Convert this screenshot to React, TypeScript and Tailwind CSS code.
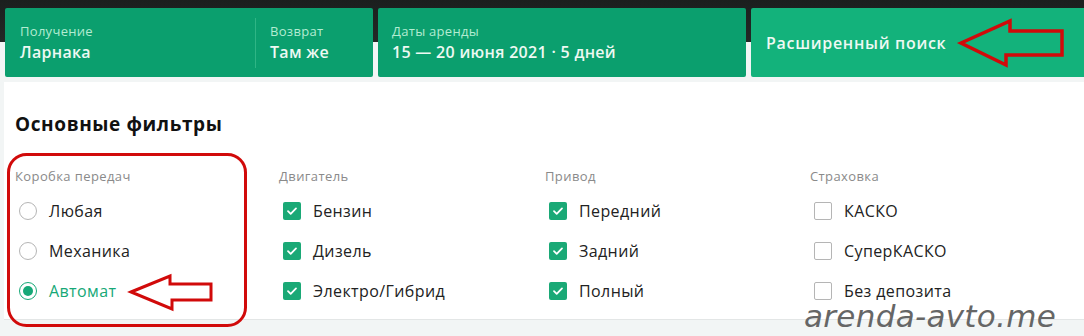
import React from "react";

const font = { fontFamily: '"Open Sans", "Noto Sans", sans-serif' };

function Radio({ label, checked }: { label: string; checked?: boolean }) {
  return (
    <div className="flex items-center h-10 gap-3 pl-1">
      <span
        className={
          "w-[18px] h-[18px] rounded-full border-[1.5px] flex items-center justify-center " +
          (checked ? "border-[#16a877]" : "border-[#b5b5b5]")
        }
      >
        {checked && <span className="w-[10px] h-[10px] rounded-full bg-[#16a877]" />}
      </span>
      <span className={"text-[16px] tracking-[0.4px] " + (checked ? "text-[#16a877]" : "text-[#222]")}>{label}</span>
    </div>
  );
}

function Check({ label, checked }: { label: string; checked?: boolean }) {
  return (
    <div className="flex items-center h-10 gap-3 pl-1">
      {checked ? (
        <span className="w-[18px] h-[18px] rounded-[2px] bg-[#1aa976] flex items-center justify-center">
          <svg width="12" height="12" viewBox="0 0 12 12" fill="none">
            <path d="M2 6.2l2.7 2.6L10 3.4" stroke="white" strokeWidth="1.8" strokeLinecap="round" strokeLinejoin="round" />
          </svg>
        </span>
      ) : (
        <span className="w-[18px] h-[18px] rounded-[2px] border-[1.5px] border-[#b5b5b5] bg-white" />
      )}
      <span className="text-[16px] tracking-[0.4px] text-[#222]">{label}</span>
    </div>
  );
}

function Group({ title, w, children }: { title: string; w: string; children: React.ReactNode }) {
  return (
    <div className={w}>
      <div className="text-[13px] tracking-[0.4px] text-[#8a8a8a] h-[20px] leading-[20px]">{title}</div>
      <div className="mt-[5px]">{children}</div>
    </div>
  );
}

export default function App() {
  return (
    <div
      className="relative w-[1084px] h-[336px] overflow-hidden bg-[linear-gradient(to_bottom,#1b1f1e_0px,#232826_42px,#f2f5f5_42px)]"
      style={font}
    >
      <div className="flex gap-[5px] pl-[5px] pt-[8px] h-[77px]">
        <div className="w-[368px] bg-[#0b9f6e] rounded-[2px] flex items-center">
          <div className="w-[251px] pl-[15px] border-r border-[#2fb585] h-[50px] flex flex-col justify-center">
            <div className="text-[13px] tracking-[0.3px] text-[#b3ecd2] leading-[18px]">Получение</div>
            <div className="text-[16px] tracking-[0.3px] font-semibold text-[#eef9f3] leading-[24px]">Ларнака</div>
          </div>
          <div className="pl-[14px] flex flex-col justify-center">
            <div className="text-[13px] tracking-[0.3px] text-[#b3ecd2] leading-[18px]">Возврат</div>
            <div className="text-[16px] tracking-[0.3px] font-semibold text-[#eef9f3] leading-[24px]">Там же</div>
          </div>
        </div>
        <div className="w-[368px] bg-[#0b9f6e] rounded-[2px] pl-[14px] flex flex-col justify-center">
          <div className="text-[13px] tracking-[0.3px] text-[#b3ecd2] leading-[18px]">Даты аренды</div>
          <div className="text-[16px] tracking-[0.3px] font-semibold text-[#eef9f3] leading-[24px]">15 — 20 июня 2021 · 5 дней</div>
        </div>
        <div className="flex-1 bg-[#13b27b] rounded-l-[2px] pl-[15px] flex items-center">
          <div className="text-[16px] tracking-[0.7px] font-semibold text-[#eef9f3]">Расширенный поиск</div>
        </div>
      </div>

      <div className="mt-[5px] ml-[4px] bg-white h-[238px] border-b border-[#e3e6e6] pl-[11px]">
        <div className="pt-[30px] text-[19px] tracking-[0.6px] font-bold text-[#111] leading-[24px]">Основные фильтры</div>
        <div className="flex mt-[30px]">
          <Group title="Коробка передач" w="w-[264px]">
            <Radio label="Любая" />
            <Radio label="Механика" />
            <Radio label="Автомат" checked />
          </Group>
          <Group title="Двигатель" w="w-[266px]">
            <Check label="Бензин" checked />
            <Check label="Дизель" checked />
            <Check label="Электро/Гибрид" checked />
          </Group>
          <Group title="Привод" w="w-[265px]">
            <Check label="Передний" checked />
            <Check label="Задний" checked />
            <Check label="Полный" checked />
          </Group>
          <Group title="Страховка" w="w-[260px]">
            <Check label="КАСКО" />
            <Check label="СуперКАСКО" />
            <Check label="Без депозита" />
          </Group>
        </div>
      </div>

      <svg className="absolute inset-0 pointer-events-none" width="1084" height="336" viewBox="0 0 1084 336">
        <rect x="8.5" y="154.5" width="237" height="171" rx="18" fill="none" stroke="#d10a0a" strokeWidth="3" />
        <polygon
          points="131,292 170,276 170,284 211,284 211,300 172,300 172,309"
          fill="white"
          stroke="#d10a0a"
          strokeWidth="3"
          strokeLinejoin="miter"
        />
        <polygon
          points="961,43 1010,21 1010,31 1062,31 1062,55 1006,55 1006,65"
          fill="none"
          stroke="#d10a0a"
          strokeWidth="3.5"
        />
      </svg>

      <div
        className="absolute left-[804px] top-[298px] whitespace-nowrap text-[31px] italic font-extralight text-[#666] leading-[36px] tracking-[0.3px]"
        style={{ fontFamily: '"DejaVu Sans ExtraLight", "DejaVu Sans", sans-serif' }}
      >
        arenda-avto.me
      </div>
    </div>
  );
}
